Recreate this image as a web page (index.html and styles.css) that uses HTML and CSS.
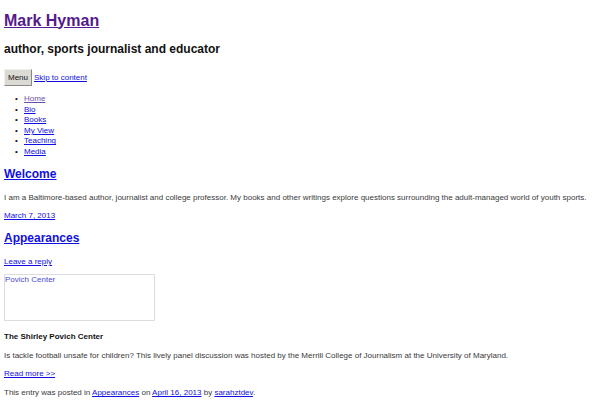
FILE: index.html
```html
<!DOCTYPE html>
<html lang="en">
<head>
<meta charset="utf-8">
<title>Mark Hyman | author, sports journalist and educator</title>
<link rel="stylesheet" href="styles.css">
</head>
<body>
<div class="page">
  <header class="site-header">
    <h1 class="site-title"><a class="visited" href="#">Mark Hyman</a></h1>
    <h2 class="site-description">author, sports journalist and educator</h2>
    <nav class="main-navigation">
      <div class="nav-top"><button class="menu-toggle" type="button">Menu</button> <a href="#content">Skip to content</a></div>
      <ul class="nav-menu">
        <li><a class="visited-light" href="#">Home</a></li>
        <li><a href="#">Bio</a></li>
        <li><a href="#">Books</a></li>
        <li><a href="#">My View</a></li>
        <li><a href="#">Teaching</a></li>
        <li><a href="#">Media</a></li>
      </ul>
    </nav>
  </header>
  <main id="content" class="site-content">
    <article class="post post-first">
      <h2 class="entry-title"><a href="#">Welcome</a></h2>
      <p class="entry-text welcome-text">I am a Baltimore-based author, journalist and college professor. My books and other writings explore questions surrounding the adult-managed world of youth sports.</p>
      <p class="entry-meta"><a href="#">March 7, 2013</a></p>
    </article>
    <article class="post post-second">
      <h2 class="entry-title"><a href="#">Appearances</a></h2>
      <p class="entry-meta reply-link"><a href="#">Leave a reply</a></p>
      <div class="entry-content">
        <a href="#" class="image-link"><span class="broken-img">Povich Center</span></a>
        <h4 class="entry-subtitle">The Shirley Povich Center</h4>
        <p class="entry-text">Is tackle football unsafe for children? This lively panel discussion was hosted by the Merrill College of Journalism at the University of Maryland.</p>
        <p class="entry-meta read-more"><a href="#">Read more &gt;&gt;</a></p>
      </div>
      <p class="entry-footer">This entry was posted in <a href="#">Appearances</a> on <a href="#">April 16, 2013</a> by <a href="#">sarahztdev</a>.</p>
    </article>
  </main>
</div>
</body>
</html>
```

FILE: styles.css
```css
html, body {
  margin: 0;
  padding: 0;
  background: #ffffff;
}
body {
  font-family: "Liberation Sans", Arial, sans-serif;
  font-size: 8px;
  color: #3a3a3a;
}
.page {
  padding: 0 4px;
  display: flow-root;
}
a {
  color: #1010e0;
}
a.visited {
  color: #551a8b;
}
a.visited-light {
  color: #6c4fae;
}
.site-title {
  font-size: 16px;
  font-weight: bold;
  margin: 11.5px 0 0;
  line-height: 18px;
}
.site-description {
  font-size: 12px;
  font-weight: bold;
  color: #111;
  margin: 12.3px 0 0;
  line-height: 14px;
}
.nav-top {
  margin-top: 13.2px;
  display: flex;
  align-items: center;
  gap: 2px;
}
.menu-toggle {
  font-family: "Liberation Sans", Arial, sans-serif;
  font-size: 8px;
  color: #111;
  background: #dcdad5;
  border: 1px solid;
  border-color: #f0efec #8a8883 #8a8883 #f0efec;
  padding: 0 3px;
  height: 17px;
  margin: 0;
}
.nav-menu {
  margin: 8.5px 0 0;
  padding-left: 20px;
  line-height: 10.45px;
  color: #111;
  list-style-type: "\2022\2002\00a0";
}
.post-first .entry-title {
  margin-top: 10.2px;
}
.post-second {
  margin-top: 9.5px;
}
.entry-title {
  font-size: 12px;
  font-weight: bold;
  margin: 0;
  line-height: 14px;
}
.entry-text, .entry-meta, .entry-footer {
  margin: 8px 0 0;
  line-height: 10.5px;
}
.welcome-text {
  margin-top: 11.3px;
}
.reply-link {
  margin-top: 11.8px;
}
.image-link {
  display: block;
  margin-top: 6.5px;
  width: 150px;
  text-decoration: none;
}
.broken-img {
  display: block;
  box-sizing: border-box;
  width: 151px;
  height: 47px;
  border: 1px solid #dcdcdc;
  padding: 0 0 0 0;
  color: #4b4bd6;
  line-height: 10px;
}
.entry-subtitle {
  font-size: 8px;
  font-weight: bold;
  color: #111;
  margin: 11.3px 0 0;
  line-height: 10.5px;
}
.entry-content .entry-text {
  margin-top: 8.5px;
}
.read-more {
  margin-top: 7.5px;
}
.entry-footer {
  margin-top: 8.5px;
}
```
